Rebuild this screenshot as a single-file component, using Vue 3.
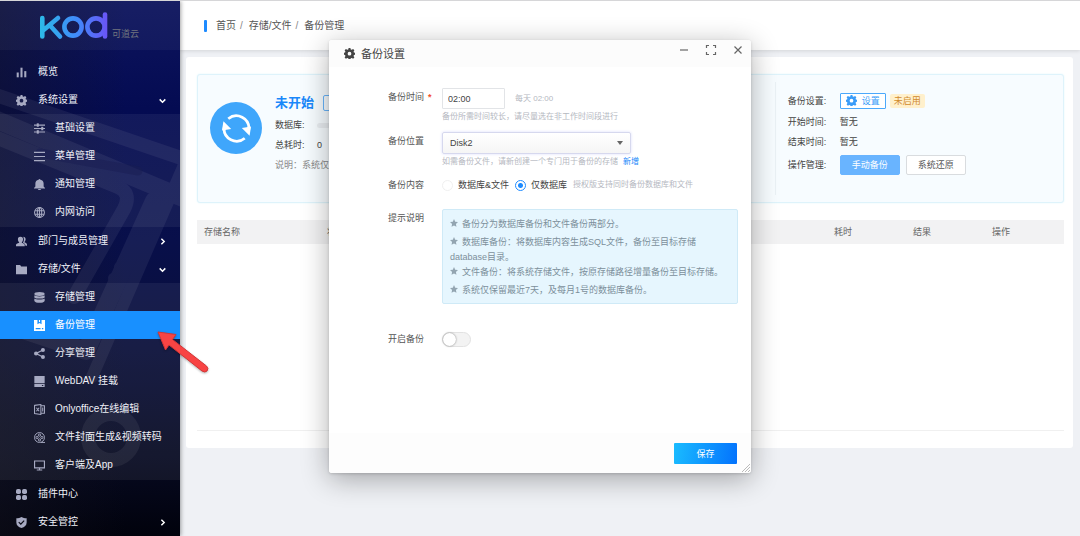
<script setup>
import { ref } from 'vue'

const menu = [
  { label: '概览', icon: 'chart' },
  {
    label: '系统设置', icon: 'gear', open: true,
    children: [
      { label: '基础设置', icon: 'sliders' },
      { label: '菜单管理', icon: 'lines' },
      { label: '通知管理', icon: 'bell' },
      { label: '内网访问', icon: 'globe' }
    ]
  },
  { label: '部门与成员管理', icon: 'users', open: false },
  {
    label: '存储/文件', icon: 'folder', open: true,
    children: [
      { label: '存储管理', icon: 'database' },
      { label: '备份管理', icon: 'disk', active: true },
      { label: '分享管理', icon: 'share' },
      { label: 'WebDAV 挂载', icon: 'drive' },
      { label: 'Onlyoffice在线编辑', icon: 'office' },
      { label: '文件封面生成&视频转码', icon: 'reel' },
      { label: '客户端及App', icon: 'monitor' }
    ]
  },
  { label: '插件中心', icon: 'grid' },
  { label: '安全管控', icon: 'shield', open: false }
]

const gear = '<path fill-rule="evenodd" d="M6.700 0h2.600l.5 2 1.500.7 1.900-1.200 1.900 1.900-1.200 1.900.6 1.400 2 .5v2.600l-2 .5-.6 1.500 1.200 1.900-1.900 1.900-1.900-1.200-1.500.6-.5 2H6.700l-.5-2-1.500-.6-1.900 1.200-1.900-1.900 1.200-1.900-.6-1.500-2-.5V7.200l2-.5.6-1.400L.9 3.400l1.900-1.900 1.900 1.200 1.500-.7zM8 5.500a2.700 2.700 0 1 0 0 5.400 2.700 2.700 0 0 0 0-5.400z"/>'

const icons = {
  gear,
  chart: '<rect x="1" y="8" width="3" height="7"/><rect x="6.500" y="1" width="3" height="14"/><rect x="12" y="6" width="3" height="9"/>',
  sliders: '<path d="M0 2.200h16v1.700H0zM0 7.200h16v1.700H0zM0 12.200h16v1.700H0z"/><rect x="4" y=".5" width="3" height="5"/><rect x="10.500" y="5.500" width="3" height="5"/><rect x="4" y="10.500" width="3" height="5"/>',
  lines: '<path d="M0 1.200h16v1.700H0zM0 7.200h16v1.700H0zM0 13.200h16v1.700H0z"/>',
  bell: '<path d="M8 0c.8 0 1.300.5 1.300 1.200C12.500 1.800 14 4 14 6.500V11l2 2v.8H0V13l2-2V6.500C2 4 3.500 1.800 6.700 1.200 6.700.5 7.200 0 8 0zM5.500 14.500h5a2.500 1.500 0 0 1-5 0z"/>',
  globe: '<g fill="none" stroke="currentColor" stroke-width="1.500"><circle cx="8" cy="8" r="7.200"/><ellipse cx="8" cy="8" rx="3.200" ry="7.200"/><path d="M8 1v14M1.500 5.500h13M1.500 10.500h13"/></g>',
  users: '<path d="M6.500 1a3.700 3.700 0 0 1 3.700 4c0 1.700-.7 3-1.700 3.800v1.100c2.500.7 4.200 1.700 4.200 3.400V15H0v-1.700c0-1.700 1.800-2.700 4.500-3.400V8.800C3.500 8 2.800 6.700 2.800 5a3.700 3.700 0 0 1 3.700-4z"/><path d="M10.500 1.200c2.200 0 3.500 1.600 3.500 3.700 0 1.500-.6 2.700-1.500 3.400v1c2.200.6 3.500 1.500 3.500 3.200V14h-2.200c0-2-1.500-3.300-3.800-4.300 1-1 1.500-2.500 1.500-4.200 0-1.700-.4-3-1-4.300z"/>',
  folder: '<path d="M0 1.500h6l1.500 2H16V15H0z"/>',
  database: '<ellipse cx="8" cy="3" rx="7.500" ry="2.900"/><path d="M.5 4.900c1.500 2.100 13.500 2.100 15 0v3c-1.500 2.300-13.500 2.300-15 0zM.5 9.300c1.500 2.100 13.500 2.100 15 0V13c-1.500 3.600-13.500 3.600-15 0z"/>',
  disk: '<path fill-rule="evenodd" d="M0 0h16v16H0zM5 0v6l3-1.800L11 6V0zM2.500 11.500v2h7v-2zM11.500 11.500v2h2v-2z"/><path d="M7.200 0h1.600v3H7.200z"/>',
  share: '<circle cx="3" cy="8" r="3"/><circle cx="13" cy="3" r="2.900"/><circle cx="13" cy="13" r="2.900"/><path d="M13 3 3 8l10 5" fill="none" stroke="currentColor" stroke-width="1.800"/>',
  drive: '<path fill-rule="evenodd" d="M.5 0h15v10.500H.5zM.5 11.500h15V16H.5zM11.500 13v1.500h2V13z"/>',
  office: '<g fill="none" stroke="currentColor" stroke-width="1.500"><path d="M.8 2 10 .8v14.400L.8 14zM10 2.500h5.200v11H10M12.700 5v6"/><path d="m3.500 5.500 4 5m0-5-4 5"/></g>',
  reel: '<g fill="none" stroke="currentColor" stroke-width="1.400"><circle cx="8" cy="8" r="7.200"/><circle cx="8" cy="4.500" r="1.600"/><circle cx="8" cy="11.500" r="1.600"/><circle cx="4.500" cy="8" r="1.600"/><circle cx="11.500" cy="8" r="1.600"/><path d="M10 15.200h6"/></g>',
  monitor: '<path fill="none" stroke="currentColor" stroke-width="1.700" d="M.8 1.500h14.400v10H.8zM8 11.500V14M4 14.500h8"/>',
  grid: '<rect x="0" y="0" width="7.200" height="7.200" rx="2.600"/><rect x="8.800" y="0" width="7.200" height="7.200" rx="2.600"/><rect x="0" y="8.800" width="7.200" height="7.200" rx="2.600"/><rect x="8.800" y="8.800" width="7.200" height="7.200" rx="2.600"/>',
  shield: '<path fill-rule="evenodd" d="M8 0c2 1.200 4.500 1.800 7.500 1.800V8c0 4-3.200 6.700-7.500 8C3.700 14.700.5 12 .5 8V1.800C3.500 1.800 6 1.200 8 0zM4.500 6.800 3.400 8l3.600 3.500 5.500-5.600-1.200-1.100L7 9.200z"/>'
}

const crumbs = ['首页', '存储/文件', '备份管理']
const columns = [
  { label: '存储名称', cls: 'c-name' },
  { label: '状态', cls: 'c-state' },
  { label: '耗时', cls: 'c-small' },
  { label: '结果', cls: 'c-small' },
  { label: '操作', cls: 'c-small' }
]
const tips = [
  { text: '备份分为数据库备份和文件备份两部分。' },
  { text: '数据库备份：将数据库内容生成SQL文件，备份至目标存储database目录。', tight: true },
  { text: '文件备份：将系统存储文件，按原存储路径增量备份至目标存储。' },
  { text: '系统仅保留最近7天，及每月1号的数据库备份。' }
]

const time = ref('02:00')
const place = ref('Disk2')
const content = ref('db')
const enabled = ref(false)
</script>

<template>
  <div class="shell">
    <aside class="side">
      <svg class="side-art" viewBox="0 0 180 536" preserveAspectRatio="xMidYMin slice" aria-hidden="true">
        <g opacity=".06" fill="none" stroke="#fff" stroke-linecap="round" stroke-linejoin="round">
          <path d="M-10 92 190 160" stroke-width="14" />
          <path d="M-10 116 190 200" stroke-width="18" />
          <path d="M-10 134 118 186Q132 192 124 208L74 296" stroke-width="14" />
          <path d="M154 200 86 350 -10 318" stroke-width="18" />
          <path d="M190 150 92 376" stroke-width="12" />
          <circle cx="111" cy="436" r="23" stroke-width="14" />
          <g fill="#fff" stroke="none">
            <circle cx="119" cy="266" r="5" />
            <circle cx="113" cy="277" r="5" />
          </g>
        </g>
        <path d="M40 152 138 170" fill="none" stroke="#0a1048" stroke-opacity=".5" stroke-width="9" stroke-linecap="round" />
      </svg>

      <div class="brand">
        <svg class="logo" viewBox="0 0 70 28" role="img" aria-label="kod">
          <defs>
            <linearGradient id="kod-fill" gradientUnits="userSpaceOnUse" x1="0" y1="0" x2="70" y2="0">
              <stop offset="0" stop-color="#2cbbe8" />
              <stop offset=".55" stop-color="#4189fb" />
              <stop offset="1" stop-color="#6c52f6" />
            </linearGradient>
          </defs>
          <g fill="none" stroke="url(#kod-fill)" stroke-width="4.600" stroke-linecap="round" stroke-linejoin="round">
            <path d="M3.300 6v18.500M19 6 4 18.500M11.500 14l9.500 10.500" />
            <circle cx="34" cy="15" r="8.600" />
            <circle cx="57" cy="15" r="8.600" />
            <path d="M66 2.500v22" />
          </g>
        </svg>
        <span class="brand-sub">可道云</span>
      </div>

      <nav class="menu">
        <div v-for="item in menu" :key="item.label" class="group">
          <a href="#" class="item">
            <svg class="ico" viewBox="0 0 16 16" aria-hidden="true" v-html="icons[item.icon]"></svg>
            <span>{{ item.label }}</span>
            <svg v-if="item.open !== undefined" class="arrow" viewBox="0 0 8 8" aria-hidden="true">
              <path :d="item.open ? 'M1.500 3 4 5.500 6.500 3' : 'M3 1.500 5.500 4 3 6.500'" />
            </svg>
          </a>
          <div v-if="item.children" class="sub">
            <a v-for="c in item.children" :key="c.label" href="#" class="item child" :class="{ active: c.active }">
              <svg class="ico" viewBox="0 0 16 16" aria-hidden="true" v-html="icons[c.icon]"></svg>
              <span>{{ c.label }}</span>
            </a>
          </div>
        </div>
      </nav>
    </aside>

    <div class="main">
      <header class="top">
        <nav class="crumbs" aria-label="路径">
          <template v-for="(c, i) in crumbs" :key="c">
            <span v-if="i" class="sep">/</span>
            <a href="#">{{ c }}</a>
          </template>
        </nav>
      </header>

      <section class="card">
        <div class="panel">
          <div class="status">
            <span class="round">
              <svg viewBox="0 0 32 32" aria-hidden="true">
                <g fill="none" stroke="#fff" stroke-width="2.800">
                  <path d="M7.500 6A13 13 0 0 1 28.800 17" />
                  <path d="M24.500 26A13 13 0 0 1 3.200 15" />
                </g>
                <path fill="#fff" d="M21.500 15.500 31 14l-1.500 9.500zM10.500 16.500 1 18 2.500 8.500z" />
              </svg>
            </span>
            <div class="status-info">
              <div class="state"><strong>未开始</strong><button type="button" class="mini" aria-label="日志"></button></div>
              <div class="kv"><span class="k">数据库:</span><i class="blurred"></i></div>
              <div class="kv"><span class="k">总耗时:</span><span>0</span></div>
              <div class="kv note">说明：系统仅保留</div>
            </div>
          </div>
          <div class="config">
            <div class="kv wide"><span class="k">备份设置:</span>
              <button type="button" class="set"><svg class="ico" viewBox="0 0 16 16" aria-hidden="true" v-html="gear"></svg>设置</button>
              <span class="tag">未启用</span>
            </div>
            <div class="kv wide"><span class="k">开始时间:</span><span>暂无</span></div>
            <div class="kv wide"><span class="k">结束时间:</span><span>暂无</span></div>
            <div class="kv wide ops"><span class="k">操作管理:</span>
              <button type="button" class="btn solid">手动备份</button>
              <button type="button" class="btn">系统还原</button>
            </div>
          </div>
        </div>

        <table class="list">
          <thead>
            <tr><th v-for="c in columns" :key="c.label" :class="c.cls" scope="col">{{ c.label }}</th></tr>
          </thead>
        </table>
        <div class="list-end"></div>
      </section>
    </div>

    <svg class="pointer" viewBox="0 0 56 46" aria-hidden="true">
      <path d="M2 3 20 5.500 16.500 10.500 50.500 37Q53 39.500 51 42 49 44 46 42L13 16 9.500 21z" />
    </svg>

    <form class="dialog" role="dialog" aria-labelledby="dlg-title" @submit.prevent>
      <div class="dlg-head">
        <svg class="ico" viewBox="0 0 16 16" aria-hidden="true" v-html="gear"></svg>
        <h1 id="dlg-title">备份设置</h1>
        <button type="button" aria-label="最小化"><svg viewBox="0 0 12 12"><path d="M2 6h8" /></svg></button>
        <button type="button" aria-label="最大化"><svg viewBox="0 0 12 12"><path d="M1.500 4V1.500H4M8 1.500h2.500V4M10.500 8v2.500H8M4 10.500H1.500V8" /></svg></button>
        <button type="button" aria-label="关闭"><svg viewBox="0 0 12 12"><path d="m2.500 2.500 7 7m0-7-7 7" /></svg></button>
      </div>

      <div class="dlg-body">
        <div class="row r-time">
          <label class="lab" for="f-time">备份时间<b>*</b></label>
          <div class="field">
            <div class="line"><input id="f-time" v-model="time" class="text" type="text"><span class="hint">每天 02:00</span></div>
            <p class="hint">备份所需时间较长，请尽量选在非工作时间段进行</p>
          </div>
        </div>
        <div class="row r-place">
          <label class="lab" for="f-place">备份位置</label>
          <div class="field">
            <div class="pick">
              <select id="f-place" v-model="place"><option>Disk2</option></select>
            </div>
            <p class="hint">如需备份文件，请新创建一个专门用于备份的存储<a href="#">新增</a></p>
          </div>
        </div>
        <div class="row r-content" role="radiogroup" aria-labelledby="l-content">
          <span id="l-content" class="lab">备份内容</span>
          <div class="field line">
            <label class="radio"><input v-model="content" type="radio" name="content" value="all" disabled>数据库&amp;文件</label>
            <label class="radio"><input v-model="content" type="radio" name="content" value="db">仅数据库</label>
            <span class="hint">授权版支持同时备份数据库和文件</span>
          </div>
        </div>
        <div class="row r-tips">
          <span class="lab">提示说明</span>
          <ul class="field tips">
            <li v-for="t in tips" :key="t.text" :class="{ tight: t.tight }">
              <svg viewBox="0 0 10 10" aria-hidden="true"><path d="m5 0 1.500 3.300 3.500.4-2.600 2.400.7 3.700L5 8 1.900 9.800l.7-3.700L0 3.700l3.500-.4z" /></svg>{{ t.text }}
            </li>
          </ul>
        </div>
        <div class="row">
          <label class="lab" for="f-on">开启备份</label>
          <input id="f-on" v-model="enabled" class="switch" type="checkbox" role="switch">
        </div>
      </div>

      <div class="dlg-foot"><button type="submit" class="save">保存</button></div>
      <svg class="grip" viewBox="0 0 8 8" aria-hidden="true"><path d="M0 8 8 0M3 8l5-5M6 8l2-2" /></svg>
    </form>
  </div>
</template>

<style>
body {
  background: #eff1f5;
}
</style>

<style scoped>
.shell,
.shell * {
  box-sizing: border-box;
}
.shell {
  position: relative;
  display: grid;
  grid-template-columns: 180px 1fr;
  min-height: 100vh;
  overflow: hidden;
  border-top: 1px solid #d6d6d8;
  background: #eff1f5;
  color: #444;
  font: 9px/18px "Liberation Sans", "Noto Sans CJK SC", sans-serif;
}
a {
  color: inherit;
  text-decoration: none;
}
button,
input,
select {
  font: inherit;
  color: inherit;
}
button {
  display: inline-flex;
  align-items: center;
  justify-content: center;
  padding: 0;
  border: 0;
  background: none;
}
p,
h1,
ul {
  margin: 0;
  padding: 0;
}
.ico {
  flex: none;
  width: 11px;
  height: 11px;
  fill: currentColor;
}

/* sidebar */
.side {
  position: relative;
  z-index: 1;
  background:
    linear-gradient(90deg, rgba(20, 20, 30, .45), rgba(20, 20, 30, 0) 70%),
    linear-gradient(#0e155e, #040b52 20%, #080f4a 45%, #0a0f3a 65%, #070a22 85%, #01020c);
  box-shadow: 1px 0 4px rgba(0, 0, 0, .35);
}
.side-art {
  position: absolute;
  inset: 0;
  width: 100%;
  height: 100%;
}
.brand {
  position: relative;
  display: flex;
  align-items: flex-end;
  gap: 3px;
  height: 49px;
  padding: 0 0 10px 39px;
  background: rgba(255, 255, 255, .04);
}
.logo {
  width: 70px;
  height: 28px;
}
.brand-sub {
  color: #73767f;
  font-size: 9px;
  line-height: 12px;
}
.menu {
  position: relative;
  padding-top: 8px;
  color: #f0f1f8;
  font-size: 10px;
}
.item {
  display: flex;
  align-items: center;
  height: 28px;
  padding: 0 13px 0 16px;
  gap: 11px;
  white-space: nowrap;
}
.item .ico {
  color: #a7aac2;
}
.arrow {
  width: 9px;
  height: 9px;
  margin-left: auto;
  fill: none;
  stroke: #fff;
  stroke-width: 1.300;
}
.sub {
  padding-bottom: 1px;
  background: rgba(255, 255, 255, .06);
}
.child {
  padding-left: 34px;
  gap: 10px;
}
.active {
  background: #1890ff;
  color: #fff;
}
.active .ico {
  color: #fff;
}

/* page */
.main {
  min-width: 0;
}
.top {
  display: flex;
  align-items: center;
  height: 49px;
  padding-left: 24px;
  background: #fff;
  box-shadow: 0 1px 4px rgba(0, 0, 0, .12);
}
.crumbs {
  display: flex;
  align-items: center;
  gap: 4px;
  color: #555;
  font-size: 10px;
}
.crumbs::before {
  content: "";
  width: 3px;
  height: 12px;
  margin-right: 5px;
  border-radius: 1px;
  background: #1e8bff;
}
.sep {
  color: #888;
  margin-right: 2px;
}
.card {
  margin: 7px 7px 0 6px;
  padding: 17px 9px 17px 11px;
  border-radius: 3px;
  background: #fff;
}
.panel {
  display: grid;
  grid-template-columns: 2fr 1fr;
  padding: 7px 0;
  border: 1px solid #def3fb;
  border-radius: 3px;
  background: #f7fcff;
  box-shadow: 0 0 2px #dff5fc;
}
.status {
  display: flex;
  align-items: flex-start;
  gap: 13px;
  padding: 10px 12px;
}
.round {
  display: flex;
  align-items: center;
  justify-content: center;
  width: 52px;
  height: 52px;
  margin-top: 10px;
  border-radius: 50%;
  background: #3fa6fb;
}
.round svg {
  width: 31px;
  height: 31px;
}
.state {
  display: flex;
  align-items: center;
  gap: 9px;
  height: 22px;
  margin-bottom: 1px;
  color: #1a88fa;
  font-size: 13px;
}
.mini {
  width: 44px;
  height: 16px;
  border: 1px solid #69b5fb;
  border-radius: 2px;
}
.kv {
  display: flex;
  align-items: center;
  height: 20px;
}
.kv .k {
  width: 42px;
}
.note {
  color: #888;
}
.blurred {
  width: 14px;
  height: 5px;
  border-radius: 3px;
  background: #e9edf1;
}
.config {
  padding: 7px 0 17px 12px;
  border-left: 1px solid #eaf1f5;
}
.wide .k {
  width: 52px;
}
.config .kv:first-child {
  height: 23px;
}
.set {
  gap: 5px;
  width: 46px;
  height: 16px;
  border: 1px solid #4ba8fb;
  border-radius: 1px;
  background: #fff;
  color: #3a9cf8;
}
.tag {
  margin-left: 4px;
  padding: 0 4px;
  border-radius: 2px;
  background: #fff0cc;
  color: #d18b2c;
  line-height: 14px;
}
.config .ops {
  height: 26px;
}
.btn {
  width: 60px;
  height: 20px;
  margin-right: 6px;
  border: 1px solid #d9dcdf;
  border-radius: 2px;
  background: #fff;
  color: #555;
}
.btn.solid {
  border-color: #69b4ff;
  background: #69b4ff;
  color: #fff;
}
.list {
  width: 100%;
  margin-top: 17px;
  border-collapse: collapse;
  table-layout: fixed;
  background: #f2f2f3;
  color: #666;
}
.list th {
  height: 24px;
  padding: 0 8px 0 7px;
  font-weight: 400;
  text-align: left;
}
.c-name {
  width: 123px;
}
.c-small {
  width: 79px;
}
.list-end {
  height: 187px;
  border-bottom: 1px solid #f0f0f0;
}

/* red marker */
.pointer {
  position: absolute;
  z-index: 2;
  top: 328px;
  left: 156px;
  width: 56px;
  height: 46px;
  fill: #f84444;
  stroke: #d33636;
  stroke-width: 1;
  filter: drop-shadow(0 1px 1px rgba(0, 0, 0, .3));
}

/* dialog */
.dialog {
  position: absolute;
  z-index: 3;
  top: 39px;
  left: 0;
  right: 0;
  width: 422px;
  margin: 0 auto;
  border-radius: 3px;
  background: #fff;
  box-shadow: 0 6px 28px rgba(0, 0, 0, .32), 0 1px 3px rgba(0, 0, 0, .15);
}
.dlg-head {
  display: flex;
  align-items: center;
  height: 27px;
  padding: 0 7px 0 15px;
  border-radius: 3px 3px 0 0;
  background: #fcfcfc;
}
.dlg-head h1 {
  flex: 1;
  margin-left: 6px;
  font-size: 11px;
  font-weight: 400;
}
.dlg-head button {
  width: 13px;
  height: 20px;
  margin-left: 14px;
  align-self: flex-start;
}
.dlg-head button svg {
  width: 12px;
  height: 12px;
  fill: none;
  stroke: #666;
  stroke-width: 1.200;
}
.dlg-body {
  padding: 21px 13px 85px 59px;
}
.row {
  display: flex;
  align-items: flex-start;
}
.lab {
  flex: none;
  width: 54px;
  color: #555;
}
.lab b {
  margin-left: 4px;
  color: #f2502c;
}
.field {
  flex: 1;
  min-width: 0;
}
.line {
  display: flex;
  align-items: center;
}
.hint {
  color: #b5b8bf;
  font-size: 8px;
  line-height: 12px;
}
p.hint {
  margin-top: 2px;
}
.hint a {
  margin-left: 5px;
  color: #1a88fa;
}
.r-time {
  margin-bottom: 9px;
}
.text {
  width: 63px;
  height: 21px;
  margin-right: 10px;
  padding: 0 5px;
  border: 1px solid #e2e4e7;
  border-radius: 1px;
  outline: 0;
  background: #fff;
  color: #444;
}
.r-place {
  margin-bottom: 8px;
}
.pick {
  position: relative;
  width: 189px;
}
.pick::after {
  content: "";
  position: absolute;
  top: 9px;
  right: 8px;
  border: 3px solid transparent;
  border-top: 4px solid #666;
  border-bottom: 0;
  pointer-events: none;
}
.pick select {
  display: block;
  width: 100%;
  height: 22px;
  padding: 0 7px;
  appearance: none;
  border: 1px solid #d6d8ee;
  border-radius: 2px;
  background: linear-gradient(#fff, #f5f5f5);
  box-shadow: 0 0 3px #d9dcfb;
  color: #444;
}
.r-content {
  margin-bottom: 15px;
}
.radio {
  display: flex;
  align-items: center;
  margin-right: 6px;
  color: #444;
}
.radio input {
  width: 11px;
  height: 11px;
  margin: 0 5px 0 0;
  appearance: none;
  border: 1px solid #1e8bff;
  border-radius: 50%;
  background: radial-gradient(circle, #1e8bff 2px, #fff 3px);
}
.radio input:disabled {
  border-color: #f0f0f0;
  background: #fff;
}
.r-tips {
  margin-bottom: 26px;
}
.tips {
  padding: 7px 7px 5px;
  border: 1px solid #cfeaf7;
  border-radius: 2px;
  background: #e6f6fe;
  color: #7c8f9b;
  line-height: 15px;
  list-style: none;
}
.tips li {
  margin-bottom: 3px;
}
.tips li.tight,
.tips li:last-child {
  margin-bottom: 0;
}
.tips svg {
  width: 8px;
  height: 8px;
  margin-right: 4px;
  fill: #93a5b1;
}
.switch {
  position: relative;
  width: 29px;
  height: 15px;
  margin: 2px 0 0;
  appearance: none;
  border: 1px solid #e2e2e2;
  border-radius: 8px;
  background: #f3f3f3;
}
.switch::before {
  content: "";
  position: absolute;
  top: 0;
  left: 0;
  width: 13px;
  height: 13px;
  border-radius: 50%;
  background: #fff;
  box-shadow: 0 0 2px rgba(0, 0, 0, .5);
}
.switch:checked {
  background: #1890ff;
}
.switch:checked::before {
  left: 14px;
}
.dlg-foot {
  display: flex;
  justify-content: flex-end;
  padding: 10px 14px 9px;
  border-radius: 0 0 3px 3px;
  background: #fdfdfd;
}
.save {
  width: 63px;
  height: 21px;
  border-radius: 1px;
  background: linear-gradient(100deg, #1abcff, #0372fd);
  color: #fff;
}
.grip {
  position: absolute;
  right: 1px;
  bottom: 1px;
  width: 8px;
  height: 8px;
  fill: none;
  stroke: #bbb;
  stroke-width: 1;
}
</style>
